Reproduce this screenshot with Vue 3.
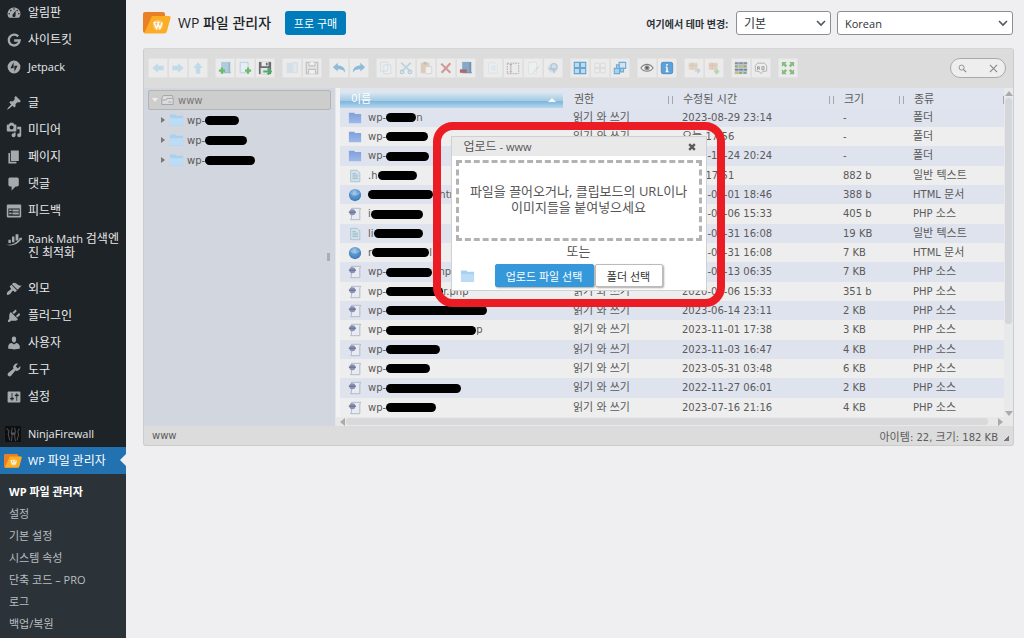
<script setup>
import { h } from 'vue'

// Renders a label with its Hangul runs wrapped, so each script gets its own size.
const Mixed = (props) =>
  props.text
    .split(/([\uac00-\ud7a3]+)/)
    .filter(Boolean)
    .map((part) => (/[\uac00-\ud7a3]/.test(part) ? h('span', { class: 'hangul' }, part) : part))
Mixed.props = ['text']

const menu = [
  [
    { label: '알림판', icon: 'dashboard' },
    { label: '사이트킷', icon: 'google' },
    { label: 'Jetpack', icon: 'jetpack' },
  ],
  [
    { label: '글', icon: 'pin' },
    { label: '미디어', icon: 'media' },
    { label: '페이지', icon: 'pages' },
    { label: '댓글', icon: 'comment' },
    { label: '피드백', icon: 'feedback' },
    { label: 'Rank Math 검색엔진 최적화', icon: 'rank', tall: true },
  ],
  [
    { label: '외모', icon: 'brush' },
    { label: '플러그인', icon: 'plug' },
    { label: '사용자', icon: 'user' },
    { label: '도구', icon: 'wrench' },
    { label: '설정', icon: 'sliders' },
  ],
  [
    { label: 'NinjaFirewall', icon: 'ninja' },
    { label: 'WP 파일 관리자', icon: 'wpfm', active: true },
  ],
]
const submenu = ['WP 파일 관리자', '설정', '기본 설정', '시스템 속성', '단축 코드 – PRO', '로그', '백업/복원']

// [icon, label, dimmed]
const toolbar = [
  [['back', '뒤로', 1], ['forward', '앞으로', 1], ['up', '상위 폴더', 1]],
  [['mkdir', '새 폴더'], ['mkfile', '새 파일'], ['upload', '업로드']],
  [['open', '열기', 1], ['save', '다운로드', 1]],
  [['undo', '실행 취소'], ['redo', '다시 실행']],
  [['copy', '복사', 1], ['cut', '잘라내기', 1], ['paste', '붙여넣기', 1], ['rm', '삭제'], ['empty', '폴더 비우기']],
  [['dup', '복제', 1], ['rename', '이름 바꾸기'], ['edit', '편집', 1], ['resize', '크기 조정', 1]],
  [['selall', '모두 선택'], ['selnone', '선택 해제', 1], ['selinv', '선택 반전']],
  [['eye', '미리보기'], ['info', '정보']],
  [['extract', '압축 풀기', 1], ['archive', '압축', 1]],
  [['view', '보기'], ['sort', '정렬']],
  [['full', '전체 화면']],
]

const treeBars = [34, 42, 50]

const rows = [
  { icon: 'folder', pre: 'wp-', w: 30, post: 'n', date: '2023-08-29 23:14', size: '-', kind: '폴더' },
  { icon: 'folder', pre: 'wp-', w: 42, post: '', date: '오늘 17:56', size: '-', kind: '폴더' },
  { icon: 'folder', pre: 'wp-', w: 43, post: '', date: '2023-10-24 20:24', size: '-', kind: '폴더' },
  { icon: 'text', pre: '.h', w: 39, post: '', date: '오늘 17:51', size: '882 b', kind: '일반 텍스트' },
  { icon: 'globe', pre: '', w: 65, post: '. html', date: '2023-08-01 18:46', size: '388 b', kind: 'HTML 문서' },
  { icon: 'php', pre: 'i', w: 52, post: '', date: '2020-02-06 15:33', size: '405 b', kind: 'PHP 소스' },
  { icon: 'text', pre: 'li', w: 49, post: '', date: '2023-03-31 16:08', size: '19 KB', kind: '일반 텍스트' },
  { icon: 'globe', pre: 'r', w: 57, post: 'l', date: '2023-03-31 16:08', size: '7 KB', kind: 'HTML 문서' },
  { icon: 'php', pre: 'wp-', w: 46, post: 'php', date: '2023-05-13 06:35', size: '7 KB', kind: 'PHP 소스' },
  { icon: 'php', pre: 'wp-', w: 57, post: 'r.php', date: '2020-02-06 15:33', size: '351 b', kind: 'PHP 소스' },
  { icon: 'php', pre: 'wp-', w: 101, post: '', date: '2023-06-14 23:11', size: '2 KB', kind: 'PHP 소스' },
  { icon: 'php', pre: 'wp-', w: 90, post: 'p', date: '2023-11-01 17:38', size: '3 KB', kind: 'PHP 소스' },
  { icon: 'php', pre: 'wp-', w: 54, post: '', date: '2023-11-03 16:47', size: '4 KB', kind: 'PHP 소스' },
  { icon: 'php', pre: 'wp-', w: 44, post: '', date: '2023-05-31 03:48', size: '6 KB', kind: 'PHP 소스' },
  { icon: 'php', pre: 'wp-', w: 75, post: '', date: '2022-11-27 06:01', size: '2 KB', kind: 'PHP 소스' },
  { icon: 'php', pre: 'wp-', w: 50, post: '', date: '2023-07-16 21:16', size: '4 KB', kind: 'PHP 소스' },
]
</script>

<template>
  <svg class="sprite" aria-hidden="true">
    <defs>
      <linearGradient id="gFolder" x1="0" y1="0" x2="0" y2="1">
        <stop offset="0" stop-color="#7f9fdb" /><stop offset="1" stop-color="#9db9ea" />
      </linearGradient>
      <radialGradient id="gGlobe" cx=".45" cy=".3" r=".7">
        <stop offset="0" stop-color="#a9cdea" /><stop offset=".5" stop-color="#5a97cc" /><stop offset="1" stop-color="#3c78b4" />
      </radialGradient>
    </defs>
    <symbol id="dashboard" viewBox="0 0 20 20"><path fill-rule="evenodd" d="M3.76 16h12.48A7.998 7.998 0 0 0 10 3a7.998 7.998 0 0 0-6.24 13zM10 4c.55 0 1 .45 1 1s-.45 1-1 1-1-.45-1-1 .45-1 1-1zM6 6c.55 0 1 .45 1 1s-.45 1-1 1-1-.45-1-1 .45-1 1-1zm8 0c.55 0 1 .45 1 1s-.45 1-1 1-1-.45-1-1 .45-1 1-1zm-5.37 5.55L12 7v6c0 1.1-.9 2-2 2s-2-.9-2-2c0-.57.24-1.08.63-1.45zM4 10c.55 0 1 .45 1 1s-.45 1-1 1-1-.45-1-1 .45-1 1-1zm12 0c.55 0 1 .45 1 1s-.45 1-1 1-1-.45-1-1 .45-1 1-1z" /></symbol>
    <symbol id="google" viewBox="0 0 20 20"><path d="M15.200 5.400A6.800 6.800 0 1 0 17 10.600H10.200" fill="none" stroke="currentColor" stroke-width="3" /></symbol>
    <symbol id="jetpack" viewBox="0 0 20 20"><path fill-rule="evenodd" d="M10 2a8 8 0 1 0 0 16 8 8 0 0 0 0-16zM9.500 4v7.500H5.500zM10.500 16V8.500h4z" /></symbol>
    <symbol id="pin" viewBox="0 0 20 20"><path d="M10.440 3.020l1.820-1.820 6.360 6.350-1.830 1.820c-1.050-.68-2.480-.57-3.410.36l-.75.75c-.92.93-1.040 2.350-.35 3.410l-1.830 1.820-2.410-2.410-2.800 2.790c-.42.42-3.380 2.710-3.800 2.290s1.860-3.390 2.280-3.810l2.790-2.790L4.100 9.360l1.830-1.820c1.050.69 2.480.57 3.400-.36l.75-.75c.93-.92 1.050-2.350.36-3.410z" /></symbol>
    <symbol id="media" viewBox="0 0 20 20"><path fill-rule="evenodd" d="M13 11V4c0-.55-.45-1-1-1h-1.670L9 1H5L3.670 3H2c-.55 0-1 .45-1 1v7c0 .55.45 1 1 1h10c.55 0 1-.45 1-1zM7 4.500c1.380 0 2.500 1.120 2.500 2.500S8.380 9.500 7 9.500 4.500 8.380 4.500 7 5.620 4.500 7 4.500zM14 6h5v10.500c0 1.380-1.120 2.500-2.500 2.500S14 17.880 14 16.500s1.120-2.500 2.500-2.500c.17 0 .34.02.5.05V9h-3V6zm-4 8.050V13h2v3.500c0 1.380-1.120 2.500-2.500 2.500S7 17.880 7 16.500 8.120 14 9.500 14c.17 0 .34.02.5.05z" /></symbol>
    <symbol id="pages" viewBox="0 0 20 20"><path d="M6 15V2h10v13H6zm-1 1h8v2H3V5h2v11z" /></symbol>
    <symbol id="comment" viewBox="0 0 20 20"><path d="M5 2h9c1.100 0 2 .9 2 2v7c0 1.100-.9 2-2 2h-2l-5 5v-5H5c-1.100 0-2-.9-2-2V4c0-1.100.9-2 2-2z" /></symbol>
    <symbol id="feedback" viewBox="0 0 20 20"><path fill-rule="evenodd" d="M2 2h16c.55 0 1 .45 1 1v14c0 .55-.45 1-1 1H2c-.55 0-1-.45-1-1V3c0-.55.45-1 1-1zm15 14V7H3v9h14zM4 8v2h3V8H4zm4 0v2.500h8V8H8zm-4 4v2h3v-2H4zm4 0v2.500h8V12H8z" /></symbol>
    <symbol id="rank" viewBox="0 0 20 20"><path d="M3 11h3v4H3zM7.500 7h3v7h-3zM12 4h3.500v8H12z" /><path d="M0 17c6 1 12-1 17-7l-1-1 4-1-.5 4-1-1C14 17 7 20 0 17z" /></symbol>
    <symbol id="brush" viewBox="0 0 20 20"><path d="M14.480 11.060L7.410 3.990l1.500-1.500c.5-.56 2.300-.47 3.510.32 1.210.8 1.430 1.280 2.910 2.100 1.180.64 2.450 1.260 4.450.85zm-.71.71L6.700 4.700 4.930 6.470c-.39.39-.39 1.020 0 1.410l1.060 1.060c.39.39.39 1.030 0 1.420-.6.6-1.430 1.110-2.210 1.690-.35.26-.7.53-1.010.84C1.430 14.230.4 16.080 1.400 17.070c.99 1 2.840-.03 4.180-1.360.31-.31.58-.66.85-1.020.57-.78 1.080-1.610 1.690-2.210.39-.39 1.020-.39 1.410 0l1.060 1.060c.39.39 1.020.39 1.410 0z" /></symbol>
    <symbol id="plug" viewBox="0 0 20 20"><path d="M13.110 4.360L9.870 7.600 8 5.730l3.240-3.240c.35-.34 1.050-.2 1.560.32.52.51.66 1.210.31 1.550zm-8 1.770l.91-1.120 9.010 9.010-1.190.84c-.71.71-2.630 1.160-3.820 1.160H6.140L4.900 17.260c-.59.59-1.540.59-2.120 0-.59-.58-.59-1.530 0-2.120l1.240-1.240v-3.880c0-1.130.4-3.190 1.090-3.890zm7.260 3.970l3.240-3.240c.34-.35 1.040-.21 1.550.31.52.51.66 1.210.31 1.550l-3.240 3.250z" /></symbol>
    <symbol id="user" viewBox="0 0 20 20"><path d="M10 9.250c-2.270 0-2.730-3.440-2.730-3.440C7 4.020 7.820 2 9.970 2c2.160 0 2.980 2.020 2.710 3.810 0 0-.41 3.440-2.680 3.440zm0 2.570L12.720 10c2.390 0 4.520 2.330 4.520 4.530v2.490s-3.650 1.130-7.240 1.130c-3.650 0-7.240-1.130-7.240-1.130v-2.490c0-2.250 1.940-4.480 4.470-4.480z" /></symbol>
    <symbol id="wrench" viewBox="0 0 20 20"><path d="M16.680 9.770c-1.340 1.340-3.300 1.670-4.950.99l-5.410 6.520c-.99.99-2.590.99-3.580 0s-.99-2.590 0-3.570l6.520-5.420c-.68-1.650-.35-3.610.99-4.950 1.280-1.280 3.120-1.620 4.720-1.060l-2.890 2.890 2.820 2.820 2.860-2.870c.53 1.580.18 3.390-1.080 4.650z" /></symbol>
    <symbol id="sliders" viewBox="0 0 20 20"><path fill-rule="evenodd" d="M18 16V4c0-.55-.45-1-1-1H3c-.55 0-1 .45-1 1v12c0 .55.45 1 1 1h14c.55 0 1-.45 1-1zM8 11h1c.55 0 1 .45 1 1s-.45 1-1 1H8v1.500c0 .28-.22.5-.5.5s-.5-.22-.5-.5V13H6c-.55 0-1-.45-1-1s.45-1 1-1h1V5.500c0-.28.22-.5.5-.5s.5.22.5.5V11zm5-2h-1c-.55 0-1-.45-1-1s.45-1 1-1h1V5.500c0-.28.22-.5.5-.5s.5.22.5.5V7h1c.55 0 1 .45 1 1s-.45 1-1 1h-1v5.500c0 .28-.22.5-.5.5s-.5-.22-.5-.5V9z" /></symbol>
    <symbol id="ninja" viewBox="0 0 20 20"><rect width="20" height="20" fill="#0c0e10" /><path d="M2 3l3 3-1 4 2 8M9 2l-1 6 1 3-1 8M12 2l1 5-1 5 1 7M18 3l-2 4 1 4-2 7" fill="none" stroke="#4c4f52" stroke-width="1.300" /><path d="M7 8l6 0-1 3H8z" fill="#55585b" /></symbol>
    <symbol id="wpfm" viewBox="0 0 28 24">
      <path d="M2 1h18a2 2 0 0 1 2 2v2h3v4L20 22H2a2 2 0 0 1-2-2V3a2 2 0 0 1 2-2z" fill="#e98024" />
      <path d="M9 5h17a1.500 1.500 0 0 1 1.500 2L24 20a3 3 0 0 1-3 2.500H1z" fill="#fbad26" />
      <circle cx="15" cy="14" r="5.200" fill="#fcc565" />
      <path d="M11 11.500l2.600 6 1.500-4.500 1.800 4.500 2.300-6M10.500 11.300h2.500M14 11.300h2.500" fill="none" stroke="#fff" stroke-width="1.300" />
    </symbol>

    <symbol id="back" viewBox="0 0 16 16"><path d="M1.500 8L8 2.500v3h6.500v5H8v3z" fill="#a5cfe8" /></symbol>
    <symbol id="forward" viewBox="0 0 16 16"><path d="M14.500 8L8 2.500v3H1.500v5H8v3z" fill="#a5cfe8" /></symbol>
    <symbol id="up" viewBox="0 0 16 16"><path d="M8 1.500L2.500 8h3v6.500h5V8h3z" fill="#a5cfe8" /></symbol>
    <symbol id="mkdir" viewBox="0 0 16 16"><path d="M4 1h10v11l1 2H4z" fill="#90b3cc" /><path d="M4 1h8v12H4z" fill="#a9c9de" /><path d="M1 11h7M4.500 7.500v7" stroke="#5fb55f" stroke-width="2.600" /></symbol>
    <symbol id="mkfile" viewBox="0 0 16 16"><path d="M2.500 1.500h9v12h-9z" fill="#e6eff5" stroke="#b4cad8" /><path d="M8 11h7M11.500 7.500v7" stroke="#5fb55f" stroke-width="2.600" /></symbol>
    <symbol id="upload" viewBox="0 0 16 16"><path d="M1 1h14v14H1z" fill="#5d6064" /><path d="M4 1h8v5H4z" fill="#e8eaec" /><path d="M9 2h2v3H9z" fill="#5d6064" /><path d="M3 8h10v7H3z" fill="#e4e6e8" /><path d="M6 12h8M11 8.500l3.500 3.500-3.500 3.500" stroke="#3ea35a" stroke-width="2.400" fill="none" /></symbol>
    <symbol id="open" viewBox="0 0 16 16"><path d="M2 2h6v12H2z" fill="#c6dae6" /><path d="M9 2h5v11H9z" fill="#dde7ed" stroke="#bccfda" /></symbol>
    <symbol id="save" viewBox="0 0 16 16"><path d="M1.500 1.500h13v13h-13z" fill="#e2e2e2" stroke="#a4a6a8" stroke-width="1.500" /><path d="M4.500 1.500v4h7v-4M4 14.500v-5h8v5" fill="#f2f2f2" stroke="#a4a6a8" stroke-width="1.300" /></symbol>
    <symbol id="undo" viewBox="0 0 16 16"><path d="M1 7l5.500-5v3C12 5 15 8 15 13c-2-3-4.500-3.800-8.500-3.600V12z" fill="#83b6d9" /></symbol>
    <symbol id="redo" viewBox="0 0 16 16"><path d="M15 7L9.500 2v3C4 5 1 8 1 13c2-3 4.500-3.800 8.500-3.600V12z" fill="#83b6d9" /></symbol>
    <symbol id="copy" viewBox="0 0 16 16"><path d="M2 1.500h8v10H2zM5.500 4.500h8v10h-8z" fill="#edf2f5" stroke="#bfd0da" /></symbol>
    <symbol id="cut" viewBox="0 0 16 16"><path d="M2.500 2L13 12M13.500 2L3 12" stroke="#a9c4d4" stroke-width="2" /><circle cx="3.500" cy="12.500" r="2" fill="none" stroke="#8fbbd9" stroke-width="1.500" /><circle cx="12.500" cy="12.500" r="2" fill="none" stroke="#8fbbd9" stroke-width="1.500" /></symbol>
    <symbol id="paste" viewBox="0 0 16 16"><path d="M2 2h10v12H2z" fill="#d6b997" /><path d="M5 1h4v3H5z" fill="#a8a5a0" /><path d="M7.500 6.500h7v8h-7z" fill="#f3f3f3" stroke="#c9c5c0" /></symbol>
    <symbol id="rm" viewBox="0 0 16 16"><path d="M2.500 3L13 13.500M13 2.500L3 13.500" stroke="#cf9090" stroke-width="2.400" /></symbol>
    <symbol id="empty" viewBox="0 0 16 16"><path d="M4 1h10v11l1 2H4z" fill="#6488ab" /><path d="M4 1h8v12H4z" fill="#7ba2c4" /><path d="M1 9.500h8v4H1z" fill="#a85c6b" /></symbol>
    <symbol id="dup" viewBox="0 0 16 16"><path d="M3 2h7l3 3v9H3z" fill="#eaf1f5" stroke="#cbdbe4" /><path d="M6 5h5v6H6z" fill="#d4e3ec" /></symbol>
    <symbol id="rename" viewBox="0 0 16 16"><path d="M1.500 2.500h13v12h-13z" fill="none" stroke="#a4a4a4" stroke-dasharray="2 1" /><path d="M4 4h3M5.500 4v8.500M4 12.500h3" stroke="#a4a4a4" fill="none" /></symbol>
    <symbol id="edit" viewBox="0 0 16 16"><path d="M3 1.500h9v13H3z" fill="#f1f2f2" stroke="#d5dcdf" /><path d="M14 6l-6 7-1 1 1.500-.3L15 7z" fill="#b9d3c1" /></symbol>
    <symbol id="resize" viewBox="0 0 16 16"><path d="M3 5l6-3 5 4-2 6-7 1-3-4z" fill="#c4d7e6" /><circle cx="9" cy="6.500" r="3.500" fill="none" stroke="#8fb1cc" stroke-width="1.500" /><path d="M9 10v4M3 9h8" stroke="#84acce" stroke-width="1.600" /></symbol>
    <symbol id="selall" viewBox="0 0 16 16"><path d="M1.500 1.500h6v6h-6zM8.500 1.500h6v6h-6zM1.500 8.500h6v6h-6zM8.500 8.500h6v6h-6z" fill="#b9dbf2" stroke="#5a9fcd" stroke-width="1.300" /></symbol>
    <symbol id="selnone" viewBox="0 0 16 16"><path d="M2 2.500h5.500v5H2zM8.500 2.500H14v5H8.500zM2 8.500h5.500v5H2zM8.500 8.500H14v5H8.500z" fill="#eee" stroke="#cfcfcf" /></symbol>
    <symbol id="selinv" viewBox="0 0 16 16"><path d="M7 1.500h7.500v7H7z" fill="#cfe4f3" stroke="#66a5d0" stroke-width="1.300" /><path d="M1.500 8.500h6v6h-6zM8.500 8.500H12v4H8.500zM4 4.500h3v4H4z" fill="#a4cfec" stroke="#66a5d0" stroke-width="1.300" /></symbol>
    <symbol id="eye" viewBox="0 0 16 16"><path d="M1 8c3.500-5.500 10.500-5.500 14 0-3.500 5-10.500 5-14 0z" fill="#f4f4f4" stroke="#777" stroke-width="1.200" /><circle cx="8" cy="7.800" r="3" fill="#888" /><circle cx="8" cy="7.800" r="1.200" fill="#444" /></symbol>
    <symbol id="info" viewBox="0 0 16 16"><rect x="1.500" y="1.500" width="13" height="13" rx="2" fill="#4f9ad6" stroke="#3c7fb8" /><path d="M8 7v5M6.500 7H8M6.500 12h3.200" stroke="#fff" stroke-width="1.700" /><circle cx="8" cy="4.400" r="1.100" fill="#fff" /></symbol>
    <symbol id="extract" viewBox="0 0 16 16"><path d="M2 2h10v8H2z" fill="#dcc5aa" /><path d="M2 5h10M6 2v8" stroke="#c9ae98" /><path d="M9 11h5M12 8.500l2.500 2.500-2.500 3" stroke="#aac0d0" fill="none" stroke-width="1.800" /></symbol>
    <symbol id="archive" viewBox="0 0 16 16"><path d="M2 2h10v8H2z" fill="#dcbea2" /><path d="M2 5h10M6 2v8" stroke="#cba790" /><path d="M8 12h6M11 9v6" stroke="#92c98c" stroke-width="2.400" /></symbol>
    <symbol id="view" viewBox="0 0 16 16"><path d="M1 1h14v14H1z" fill="#b8c1ca" /><path d="M1 2.500h14M1 10h14" stroke="#66768a" stroke-width="1.500" stroke-dasharray="4 1" /><path d="M1 6h14M1 13.500h14" stroke="#6fa56d" stroke-width="2" stroke-dasharray="3 2" /><path d="M6 6h4M1 13.500h4" stroke="#d9b65c" stroke-width="2" /></symbol>
    <symbol id="sort" viewBox="0 0 16 16"><path d="M4 2.500h8l2.500 3v6L10 12l-2 2.500L6 12l-4.500-.5v-6z" fill="#eee" stroke="#a8a8a8" /><path d="M4 10V6.500h2V10M4 8.500h2M9 6.500h2.500v3.500H9z" fill="none" stroke="#8c8c8c" /></symbol>
    <symbol id="full" viewBox="0 0 16 16"><path d="M1 1h5.500L5 3l2 2-2 2-2-2-2 1.500zM15 1v5.500L13 5l-2 2-2-2 2-2-1.500-2zM1 15V9.500L3 11l2-2 2 2-2 2 1.500 2zM15 15H9.500L11 13l-2-2 2-2 2 2 2-1.500z" fill="#7cb676" /></symbol>

    <symbol id="folder" viewBox="0 0 16 14"><path d="M1 1h6l1 1.500h7V13H1z" fill="url(#gFolder)" /></symbol>
    <symbol id="dir" viewBox="0 0 16 14"><path d="M1 1h6l1 1.500h7V13H1z" fill="#a9d0f0" /><path d="M1 5h14v8H1z" fill="#bcdcf5" /></symbol>
    <symbol id="text" viewBox="0 0 16 16"><path d="M3 1.500h7.500l3 3v10H3z" fill="#d3e3ec" stroke="#a6c0cf" /><path d="M5 5h4M5 7h6.500M5 9h6.500M5 11h6.500" stroke="#9ab6c7" /></symbol>
    <symbol id="globe" viewBox="0 0 16 16"><circle cx="8" cy="8" r="7" fill="url(#gGlobe)" /><path d="M3 5.500c3 2.500 7 2.500 10 0" stroke="#a9cdea" fill="none" /></symbol>
    <symbol id="php" viewBox="0 0 16 16"><path d="M4 1.500h10.500l-1 2v11H3l1-2z" fill="#e9ebf2" stroke="#aab3c4" /><circle cx="5" cy="6" r="3.500" fill="#8b91b2" /><path d="M1 6h8" stroke="#6d749a" stroke-width="1.500" /></symbol>
    <symbol id="drive" viewBox="0 0 16 14"><path d="M3 1.500h11l1 3v8H1v-8z" fill="#ddd" stroke="#9a9aa2" /><path d="M1.500 7h5l1-2h7" stroke="#9a9aa2" fill="none" /><path d="M9 9.500h4" stroke="#8aa0b4" /></symbol>
    <symbol id="chevron" viewBox="0 0 10 10"><path d="M1 3l4 4 4-4" fill="none" stroke="#50575e" stroke-width="1.600" /></symbol>
  </svg>

  <div class="page">
    <nav class="sidebar">
      <ul v-for="(group, g) in menu" :key="g" class="group">
        <li v-for="item in group" :key="item.label">
          <a href="#" class="item" :class="{ active: item.active, tall: item.tall }">
            <svg class="mi" :class="{ wide: item.icon === 'ninja' || item.icon === 'wpfm' }"><use :href="'#' + item.icon" /></svg>
            <span><Mixed :text="item.label" /></span>
          </a>
        </li>
      </ul>
      <ul class="submenu">
        <li v-for="(s, i) in submenu" :key="s"><a href="#" :class="{ current: i === 0 }">{{ s }}</a></li>
      </ul>
    </nav>

    <main class="main">
      <header class="head">
        <svg class="logo"><use href="#wpfm" /></svg>
        <h1>WP 파일 관리자</h1>
        <button class="pro">프로 구매</button>
        <label class="theme-label" for="theme">여기에서 테마 변경:</label>
        <span class="pick theme">
          <select id="theme"><option>기본</option></select>
          <svg><use href="#chevron" /></svg>
        </span>
        <span class="pick lang">
          <select aria-label="언어"><option>Korean</option></select>
          <svg><use href="#chevron" /></svg>
        </span>
      </header>

      <section class="finder">
        <div class="toolbar">
          <div v-for="(set, i) in toolbar" :key="i" class="set">
            <button v-for="b in set" :key="b[0]" :aria-label="b[1]" :class="{ off: b[2] }">
              <svg><use :href="'#' + b[0]" /></svg>
            </button>
          </div>
          <div class="search">
            <svg viewBox="0 0 10 10"><circle cx="4" cy="4" r="2.800" fill="none" stroke="#888" /><path d="M6 6l3 3" stroke="#888" stroke-width="1.300" /></svg>
            <input type="text" aria-label="검색" />
            <svg viewBox="0 0 10 10"><path d="M1 1l8 8M9 1L1 9" stroke="#888" stroke-width="1.200" /></svg>
          </div>
        </div>

        <div class="work">
          <div class="tree">
            <a href="#" class="root"><i class="open-arrow"></i><svg><use href="#drive" /></svg>www</a>
            <a v-for="w in treeBars" :key="w" href="#" class="node">
              <i class="arrow"></i><svg><use href="#dir" /></svg>wp-<span class="bar" :style="{ width: w + 'px' }"></span>
            </a>
            <i class="grip"></i>
          </div>
          <div class="files">
            <div class="view">
              <table>
                <colgroup><col /><col class="c-perm" /><col class="c-date" /><col class="c-size" /><col class="c-kind" /></colgroup>
                <thead>
                  <tr>
                    <th class="sorted"><div>이름<i></i></div></th>
                    <th><div>권한</div></th>
                    <th><div>수정된 시간</div></th>
                    <th><div>크기</div></th>
                    <th><div>종류</div></th>
                  </tr>
                </thead>
                <tbody>
                  <tr v-for="(r, i) in rows" :key="i">
                    <td class="name"><div><svg><use :href="'#' + r.icon" /></svg><span>{{ r.pre }}</span><span class="bar" :style="{ width: r.w + 'px' }"></span><span>{{ r.post }}</span></div></td>
                    <td><Mixed text="읽기 와 쓰기" /></td>
                    <td><Mixed :text="r.date" /></td>
                    <td>{{ r.size }}</td>
                    <td><Mixed :text="r.kind" /></td>
                  </tr>
                </tbody>
              </table>
              <div class="vscroll"><i class="au"></i><b></b><i class="ad"></i></div>
            </div>
            <div class="hscroll"><i class="al"></i><b></b><i class="ar"></i></div>
          </div>
        </div>

        <footer class="status">
          <span>www</span>
          <span class="sum"><Mixed text="아이템: 22, 크기: 182 KB" /></span>
          <i class="corner"></i>
        </footer>

        <div class="spotlight">
          <div class="dialog" role="dialog" aria-label="업로드">
            <div class="title">
              <span><Mixed text="업로드 - www" /></span>
              <button aria-label="닫기"><svg viewBox="0 0 10 10"><path d="M1.500 1.500l7 7M8.500 1.500l-7 7" stroke="#5a5a5a" stroke-width="3" /></svg></button>
            </div>
            <div class="drop">파일을 끌어오거나, 클립보드의 URL이나 이미지들을 붙여넣으세요</div>
            <div class="or">또는</div>
            <div class="actions">
              <svg><use href="#dir" /></svg>
              <button class="primary">업로드 파일 선택</button>
              <button class="plain">폴더 선택</button>
            </div>
          </div>
        </div>
      </section>
    </main>
  </div>
</template>

<style>
body { background: #efeff1; }
.hangul { font-size: var(--hangul); }
</style>

<style scoped>
* { box-sizing: border-box; }
.sprite { position: absolute; width: 0; height: 0; }
ul { list-style: none; margin: 0; padding: 0; }
a { color: inherit; text-decoration: none; }
button, select, input { font: inherit; color: inherit; margin: 0; }
svg { flex: none; display: block; }

.page {
  display: flex;
  min-height: 100vh;
  font-family: "Open Sans", "Noto Sans CJK KR", sans-serif;
  background: #efeff1;
}

.sidebar {
  flex: none;
  width: 126px;
  display: flex;
  flex-direction: column;
  background: #1d2327;
  color: #f0f0f1;
  font-size: 11px;
  --hangul: 12px;
}
.group:first-child { margin-top: -1px; }
.group + .group { margin-top: 9px; }
.group:nth-child(n + 3) { margin-top: 10px; }
.item {
  position: relative;
  display: flex;
  align-items: center;
  height: 27px;
  padding-left: 6px;
  gap: 6px;
  line-height: 14px;
  color: #e8e9ea;
}
.item.tall { height: 41px; padding-top: 2px; }
.item.tall .mi { margin-bottom: 14px; }
.item.active { background: #2271b1; color: #fff; }
.item.active::after {
  content: "";
  position: absolute;
  right: 0;
  top: 7px;
  border: 6px solid transparent;
  border-right-color: #efeff1;
  border-left: 0;
}
.mi { width: 16px; height: 16px; fill: #a7aaad; color: #a7aaad; }
.mi.wide { width: 18px; margin: 0 0 0 -2px; }
.submenu {
  flex: 1;
  padding: 7px 0 4px 9px;
  background: #2c3338;
  color: #b9bdc1;
}
.submenu a { display: block; height: 22px; line-height: 22px; }
.submenu .current { color: #fff; font-weight: 700; }

.main { flex: 1; min-width: 0; padding: 11px 10px 0 17px; }
.head { display: flex; align-items: center; height: 24px; color: #2c3338; }
.logo { width: 28px; height: 24px; }
h1 { margin: 0 14px 0 7px; font-size: 14px; line-height: 24px; font-weight: 500; color: #1d2327; }
.pro {
  width: 61px;
  height: 24px;
  padding: 0;
  border: 0;
  border-radius: 3px;
  background: #007cba;
  color: #fff;
  font-size: 11px;
}
.theme-label { margin-left: auto; margin-right: 8px; font-size: 10px; font-weight: 700; }
.pick { position: relative; height: 24px; }
.pick.theme { width: 95px; margin-right: 6px; font-size: 12px; }
.pick.lang { width: 176px; font-size: 11px; margin-right: 1px; }
.pick select {
  appearance: none;
  width: 100%;
  height: 24px;
  padding: 0 20px 0 7px;
  border: 1px solid #8c8f94;
  border-radius: 3px;
  background: #fff;
  color: #2c3338;
}
.pick svg { position: absolute; right: 5px; top: 7px; width: 10px; height: 10px; }

.finder {
  position: relative;
  margin-top: 13px;
  border: 1px solid #ccc;
  border-top-color: #d6d6d6;
  border-radius: 3px;
  background: #dcdcdc;
  color: #5a5a5a;
  font-family: "DejaVu Sans", "Noto Sans CJK KR", sans-serif;
  font-size: 10px;
  --hangul: 11px;
}
.toolbar { display: flex; align-items: center; gap: 7px; height: 39px; padding: 0 7px 1px 4px; }
.set { display: flex; }
.set button {
  display: grid;
  place-items: center;
  width: 20px;
  height: 20px;
  padding: 0;
  border: 1px solid #e2e2e2;
  background: #ebebeb;
}
.set button + button { border-left-color: #dedede; }
.set svg { width: 14px; height: 14px; opacity: 0.9; }
.set .off svg { opacity: 0.6; }
.search {
  display: flex;
  align-items: center;
  width: 56px;
  height: 20px;
  margin-left: auto;
  padding: 0 7px;
  border: 1px solid #aaa;
  border-radius: 10px;
  background: #eee;
}
.search input { flex: 1; width: 0; min-width: 0; border: 0; padding: 0; background: none; outline: 0; }
.search svg { width: 9px; height: 9px; }

.work { display: flex; }
.tree { position: relative; flex: none; width: 191px; padding: 2px 4px; background: #d2d6de; }
.root, .node { display: flex; align-items: center; }
.root { height: 20px; border: 1px solid #b4b4b4; border-radius: 2px; background: #cdcdcd; padding-left: 3px; color: #777; }
.root svg { width: 13px; height: 12px; margin: 0 4px 0 3px; }
.open-arrow { border: 3px solid transparent; border-top: 4px solid #eee; border-bottom: 0; }
.node { height: 20px; padding-left: 13px; }
.node svg { width: 15px; height: 14px; margin: 0 3px 0 4px; }
.arrow { border: 3px solid transparent; border-left: 4px solid #777; border-right: 0; }
.bar { flex: none; height: 9px; border-radius: 5px; background: #000; }
.grip { position: absolute; right: 5px; top: 165px; width: 3px; height: 8px; background: #a9adb5; }

.files { flex: 1; min-width: 0; border-left: 1px solid #e6e6e6; background: #eeeff0; }
.view { display: flex; padding-left: 4px; background: linear-gradient(90deg, #f2f2f2 4px, #e0e4ee 4px); }
table { flex: 1; min-width: 0; border-collapse: collapse; table-layout: fixed; }
.c-perm { width: 109px; }
.c-date { width: 161px; }
.c-size { width: 70px; }
.c-kind { width: 96px; }
th, td { padding: 0 0 0 5px; text-align: left; white-space: nowrap; line-height: 14px; }
th { height: 20px; font-weight: 400; font-size: 11px; padding: 3px 0 0 6px; }
th div { position: relative; height: 16px; line-height: 16px; }
th div::after {
  content: "";
  position: absolute;
  right: 4px;
  top: 4px;
  width: 3px;
  height: 8px;
  border: 1px solid #a5a8b0;
  border-width: 0 1px;
}
th:last-child div::after { right: 0; border-left: 0; }
th.sorted { padding: 3px 5px 0 0; }
.sorted div {
  padding-left: 11px;
  color: #fff;
  background: linear-gradient(#dce8f1, #a3cae4 55%, #7fb6dc 60%, #b7d8ec);
}
.sorted div::after { display: none; }
.sorted i { position: absolute; right: 7px; top: 6px; border: 4px solid transparent; border-bottom: 4px solid #f4f8fb; border-top: 0; }
td { height: 19px; }
tbody tr:nth-child(3n) td { height: 20px; }
tbody tr:nth-child(odd) { background: #dfe3ee; }
tbody tr:nth-child(even) { background: #eee; }
td.name { padding-left: 8px; }
.name div { display: flex; align-items: center; }
.name svg { width: 14px; height: 14px; margin-right: 6px; }

.vscroll { flex: none; width: 9px; display: flex; flex-direction: column; align-items: center; gap: 2px; padding: 3px 0 1px; background: #e8e9eb; }
.vscroll b { width: 7px; height: 226px; border-radius: 3px; background: #d5d6db; }
.vscroll i, .hscroll i { flex: none; border: 4px solid transparent; }
.au { border-top: 0 !important; border-bottom: 5px solid #aaa !important; }
.ad { margin-top: auto; border-bottom: 0 !important; border-top: 5px solid #aaa !important; }
.hscroll { display: flex; align-items: center; height: 9px; padding: 0 10px 0 4px; gap: 1px; background: #e8e8e9; }
.hscroll b { flex: 1; height: 7px; margin-right: 9px; border-radius: 3px; background: #d9d9dc; }
.al { border-left: 0 !important; border-right: 5px solid #aaa !important; }
.ar { border-right: 0 !important; border-left: 5px solid #aaa !important; }

.status { display: flex; align-items: center; height: 19px; padding: 0 4px 0 8px; }
.sum { margin-left: auto; }
.corner { width: 6px; height: 6px; margin: 4px 0 0 5px; background: linear-gradient(135deg, transparent 50%, #777 50%); }

.spotlight {
  position: absolute;
  left: calc(50% - 146px);
  top: 73px;
  width: 292px;
  padding: 6px 10px 8px;
  border: 8px solid #ec1c24;
  border-radius: 20px;
}
.dialog {
  height: 155px;
  border: 1px solid #d0d0d0;
  background: #fff;
  color: #555;
  font-family: "Open Sans", "Noto Sans CJK KR", sans-serif;
  --hangul: 12px;
}
.title {
  display: flex;
  align-items: center;
  justify-content: space-between;
  height: 19px;
  padding: 0 10px 0 12px;
  background: #e9e9e9;
  font-size: 11px;
  line-height: 18px;
}
.title button { display: grid; padding: 0; border: 0; background: none; }
.title svg { width: 8px; height: 8px; }
.drop {
  display: grid;
  place-items: center;
  height: 81px;
  margin: 4px 4px 0;
  padding: 0 6px 3px;
  border: 3px dashed #b2b2b2;
  font-size: 13px;
  line-height: 16px;
  text-align: center;
}
.or { height: 23px; line-height: 20px; font-size: 13px; text-align: center; }
.actions { display: flex; align-items: center; padding-left: 8px; font-size: 11px; }
.actions svg { width: 15px; height: 14px; margin-right: 20px; }
.actions button { height: 23px; padding: 0; border-radius: 2px; box-shadow: 1px 1px 2px rgba(0, 0, 0, 0.35); }
.primary { width: 99px; border: 1px solid #3498db; background: #3498db; color: #fff; }
.plain { width: 68px; margin-left: 1px; border: 1px solid #bbb; background: #fff; color: #333; }
</style>
